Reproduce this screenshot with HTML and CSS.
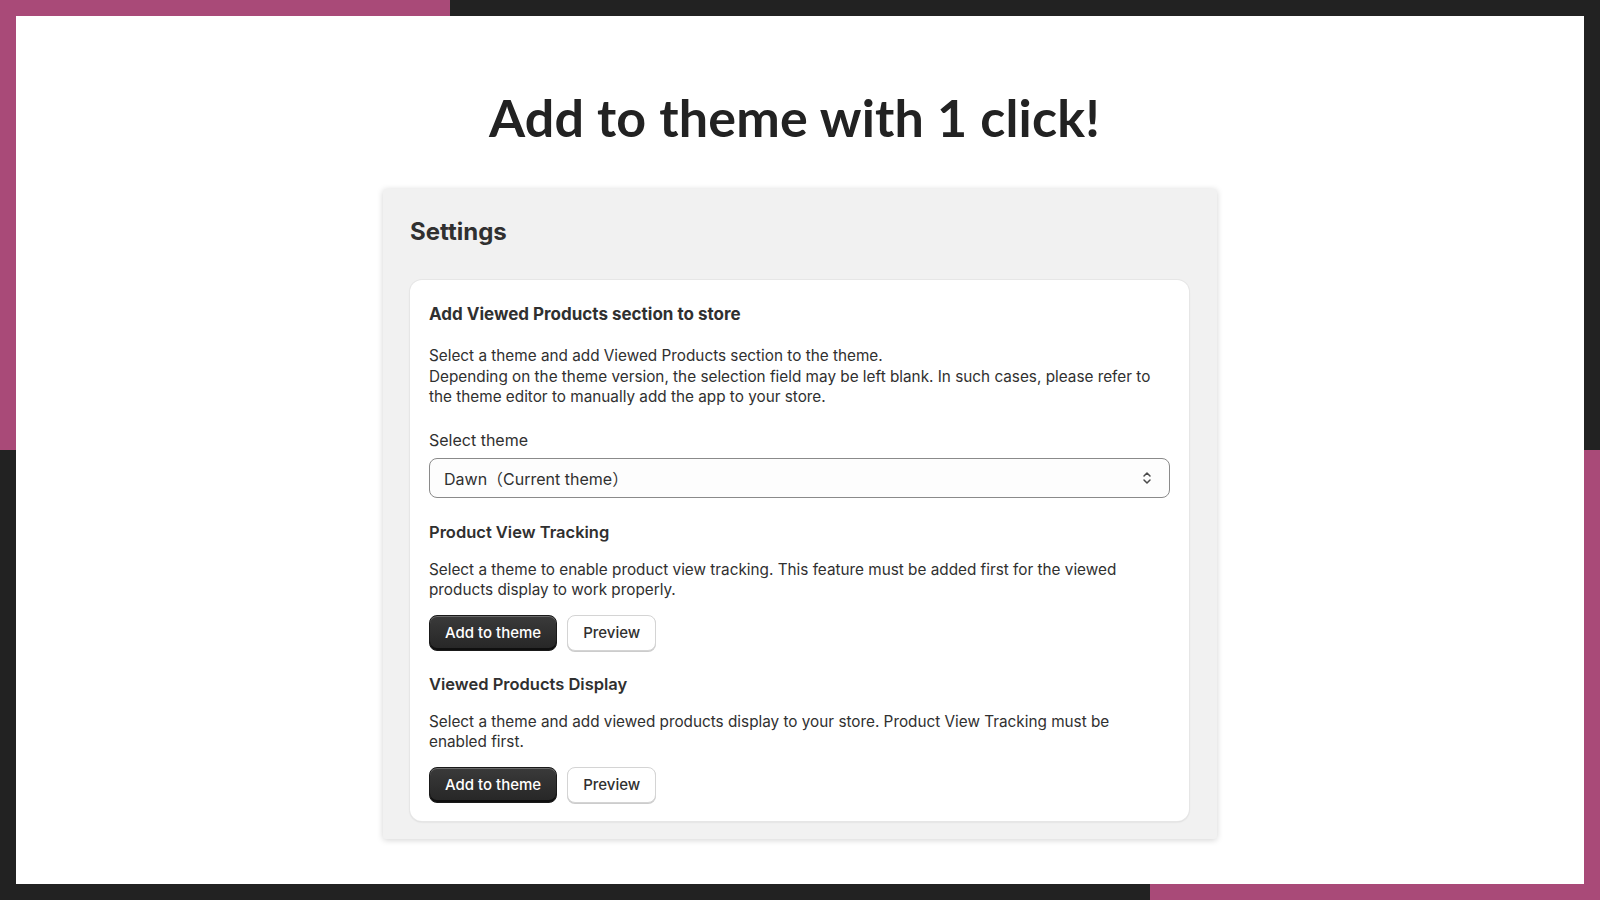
FILE: index.html
```html
<!DOCTYPE html>
<html>
<head>
    <title>Add to theme with 1 click</title>
    <link rel="stylesheet" href="styles.css">
</head>
<body>
    <div class="sheet">
        <h1 class="headline">Add to theme with 1 click!</h1>

        <div class="settings">
            <h2>Settings</h2>

            <div class="panel">
                <h3 class="panel-title">Add Viewed Products section to store</h3>
                <p class="intro">
                    Select a theme and add Viewed Products section to the theme.<br>
                    Depending on the theme version, the selection field may be left blank. In such cases, please refer to the theme editor to manually add the app to your store.
                </p>

                <div class="field">
                    <label for="theme">Select theme</label>
                    <div class="select">
                        <span id="theme">Dawn（Current theme）</span>
                        <svg width="12" height="16" viewBox="0 0 12 16" fill="none" stroke="#4a4a4a" stroke-width="1.5" stroke-linecap="round" stroke-linejoin="round">
                            <path d="M3 6l3-3 3 3"/>
                            <path d="M3 10l3 3 3-3"/>
                        </svg>
                    </div>
                </div>

                <div class="block">
                    <h3>Product View Tracking</h3>
                    <p>Select a theme to enable product view tracking. This feature must be added first for the viewed products display to work properly.</p>
                    <div class="actions">
                        <button class="btn dark">Add to theme</button>
                        <button class="btn light">Preview</button>
                    </div>
                </div>

                <div class="block">
                    <h3>Viewed Products Display</h3>
                    <p>Select a theme and add viewed products display to your store. Product View Tracking must be enabled first.</p>
                    <div class="actions">
                        <button class="btn dark">Add to theme</button>
                        <button class="btn light">Preview</button>
                    </div>
                </div>
            </div>
        </div>
    </div>
</body>
</html>
```

FILE: styles.css
```css
body {
    margin: 0;
    padding: 16px;
    height: 900px;
    box-sizing: border-box;
    background-color: #222222;
    background-image:
        linear-gradient(#a94a78, #a94a78),
        linear-gradient(#a94a78, #a94a78),
        linear-gradient(#a94a78, #a94a78),
        linear-gradient(#a94a78, #a94a78);
    background-repeat: no-repeat;
    background-size: 450px 16px, 16px 450px, 450px 16px, 16px 450px;
    background-position: left top, left top, right bottom, right bottom;
    font-family: Inter, "Noto Sans", sans-serif;
    color: #303030;
}
.sheet {
    background: #ffffff;
    height: 100%;
    padding-top: 70px;
    box-sizing: border-box;
}
.headline {
    margin: 0;
    padding-right: 11px;
    text-align: center;
    font-family: Lato, "Noto Sans", sans-serif;
    font-weight: 700;
    font-size: 52px;
    line-height: 62px;
    letter-spacing: 0.2px;
    color: #222222;
}
.settings {
    width: 834px;
    box-sizing: border-box;
    margin: 41px auto 0;
    padding: 27px 28px 18px 27px;
    background: #f1f1f1;
    border-radius: 3px;
    box-shadow: 0 1px 6px rgba(0, 0, 0, 0.18);
}
.settings h2 {
    margin: 0 0 32px;
    font-size: 24px;
    line-height: 32px;
    font-weight: 700;
    color: #303030;
}
.panel {
    background: #ffffff;
    border-radius: 12px;
    padding: 22px 19px 18px 19px;
    box-shadow: 0 0 0 1px #e6e6e6, 0 1px 2px rgba(0, 0, 0, 0.15);
}
.panel h3 {
    margin: 0;
    font-size: 16.5px;
    line-height: 24px;
    font-weight: 600;
}
.panel h3.panel-title {
    font-size: 17px;
    font-weight: 700;
}
.panel p {
    margin: 16px 0 0;
    max-width: 728px;
    font-size: 15.3px;
    line-height: 20.5px;
}
.panel p.intro {
    margin-top: 20px;
}
.field {
    margin-top: 20px;
}
.field label {
    display: block;
    font-size: 16px;
    line-height: 24px;
    margin-bottom: 6px;
}
.select {
    height: 40px;
    box-sizing: border-box;
    border: 1px solid #8a8a8a;
    border-radius: 8px;
    padding: 0 16px 0 14px;
    display: flex;
    align-items: center;
    justify-content: space-between;
    font-size: 16px;
    font-family: Inter, "Noto Sans CJK JP", sans-serif;
    background: #fdfdfd;
}
.block {
    margin-top: 22px;
}
.block + .block {
    margin-top: 21px;
}
.actions {
    margin-top: 14px;
    display: flex;
    gap: 10px;
}
.btn {
    height: 36px;
    padding: 0 15px;
    border-radius: 8px;
    font-family: Inter, sans-serif;
    font-size: 15px;
    font-weight: 500;
    cursor: pointer;
}
.btn.dark {
    background: linear-gradient(#3a3a3a, #262626);
    color: #ffffff;
    border: 1px solid #1a1a1a;
    box-shadow: inset 0 1px 0 rgba(255, 255, 255, 0.25), inset 0 -2px 0 rgba(0, 0, 0, 0.6);
}
.btn.light {
    background: #ffffff;
    color: #303030;
    border: 1px solid #d4d4d4;
    box-shadow: 0 1px 0 #cccccc;
}
```
